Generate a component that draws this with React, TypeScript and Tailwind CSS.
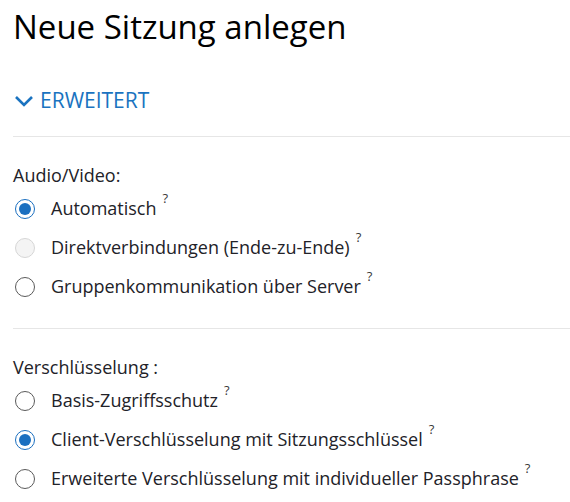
import React from 'react';

interface OptionProps {
  label: string
  checked?: boolean
  disabled?: boolean
}

const Radio: React.FC<OptionProps> = ({ label, checked, disabled }) => {
  let ring = 'border-[#5a5a5a] bg-white';
  if (checked) ring = 'border-[#1a6fc0] bg-white';
  if (disabled) ring = 'border-[#d6d6d6] bg-[#f4f4f4]';

  return <div className="flex items-center h-[39px]">
    <span className={`w-5 h-5 ml-[2px] rounded-full border flex items-center justify-center ${ring}`}>
      {checked && <span className="w-3 h-3 rounded-full bg-[#1a6fc0]" />}
    </span>
    <span className="ml-4 text-[18px] text-[#222228]">{label}</span>
    <sup className="ml-[6px] text-[13px] text-[#3a3a3a] -top-[11px]">?</sup>
  </div>;
};

export default function App() {
  return <div className="pl-[13px] pt-[5px] font-['Open_Sans',sans-serif] bg-white min-h-[502px]">
    <h1 className="text-[33px] leading-[44px] text-black">Neue Sitzung anlegen</h1>
    <div className="flex items-center mt-[37px] h-[30px] text-[#1a73c0]">
      <svg width="20" height="12" viewBox="0 0 20 12" className="ml-[1px]">
        <path d="M2 2 L10 10 L18 2" fill="none" stroke="currentColor" strokeWidth="2.6" />
      </svg>
      <span className="ml-[6px] text-[21px]">ERWEITERT</span>
    </div>
    <div className="mt-[20px] border-t border-[#e6e6e6]" />
    <div className="mt-[24px] text-[18px] text-[#222228] leading-[28px]">Audio/Video:</div>
    <Radio label="Automatisch" checked />
    <Radio label="Direktverbindungen (Ende-zu-Ende)" disabled />
    <Radio label="Gruppenkommunikation über Server" />
    <div className="mt-[22px] border-t border-[#e6e6e6]" />
    <div className="mt-[24px] text-[18px] text-[#222228] leading-[28px]">Verschlüsselung :</div>
    <Radio label="Basis-Zugriffsschutz" />
    <Radio label="Client-Verschlüsselung mit Sitzungsschlüssel" checked />
    <Radio label="Erweiterte Verschlüsselung mit individueller Passphrase" />
  </div>;
}
